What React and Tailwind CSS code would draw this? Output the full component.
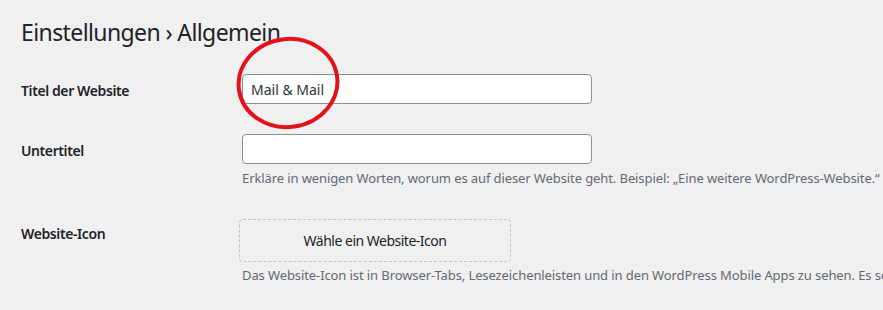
export default function App() {
  return (
    <div className="relative w-[883px] h-[310px] overflow-hidden bg-[#f0f0f1] text-[#1d2327] font-['Noto_Sans',sans-serif]">
      <div className="pl-[21px] pt-[18px]">
        <h1 className="text-[23px] leading-[29px] font-normal tracking-[-0.6px] text-[#1d2327]">Einstellungen › Allgemein</h1>
        <div className="mt-[27px] flex flex-col">
          <div className="flex items-start">
            <div className="w-[221px] shrink-0 pt-[7px] text-[14px] leading-[20px] font-semibold tracking-[-0.4px]">Titel der Website</div>
            <input
              readOnly
              value="Mail & Mail"
              className="w-[350px] shrink-0 h-[30px] px-[8px] bg-white border border-[#8c8f94] rounded-[4px] text-[14px] text-[#2c3338] outline-none"
            />
          </div>
          <div className="flex items-start mt-[30px]">
            <div className="w-[221px] shrink-0 pt-[7px] text-[14px] leading-[20px] font-semibold tracking-[-0.4px]">Untertitel</div>
            <div className="flex flex-col">
              <input
                readOnly
                value=""
                className="w-[350px] h-[30px] px-[8px] bg-white border border-[#8c8f94] rounded-[4px] text-[14px] outline-none"
              />
              <p className="mt-[5px] text-[13px] leading-[19px] tracking-[-0.1px] text-[#646970] whitespace-nowrap">
                Erkläre in wenigen Worten, worum es auf dieser Website geht. Beispiel: „Eine weitere WordPress-Website.“
              </p>
            </div>
          </div>
          <div className="flex items-start mt-[31px]">
            <div className="w-[218px] shrink-0 pt-[5px] text-[14px] leading-[20px] font-semibold tracking-[-0.4px]">Website-Icon</div>
            <div className="flex flex-col">
              <div className="w-[272px] h-[43px] flex items-center justify-center border border-dashed border-[#c3c4c7] rounded-[4px] text-[14px] tracking-[-0.5px] text-[#1d2327]">
                Wähle ein Website-Icon
              </div>
              <p className="mt-[4px] pl-[3px] text-[13px] leading-[19px] tracking-[-0.1px] text-[#646970] whitespace-nowrap">
                Das Website-Icon ist in Browser-Tabs, Lesezeichenleisten und in den WordPress Mobile Apps zu sehen. Es sollte quadratisch sein.
              </p>
            </div>
          </div>
        </div>
      </div>
      <svg className="absolute left-0 top-0" width="883" height="310" viewBox="0 0 883 310">
        <ellipse cx="288" cy="83" rx="49.5" ry="44" fill="none" stroke="#e0131c" strokeWidth="4" transform="rotate(-8 288 83)" />
      </svg>
    </div>
  );
}
